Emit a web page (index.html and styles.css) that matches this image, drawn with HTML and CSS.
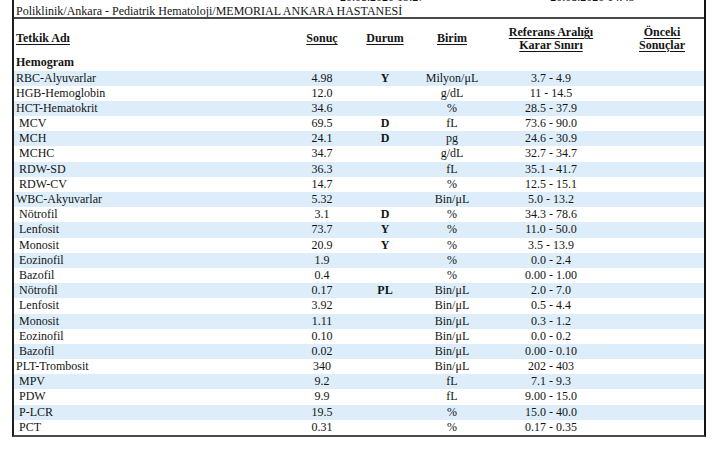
FILE: index.html
```html
<!DOCTYPE html>
<html lang="tr">
<head>
<meta charset="utf-8">
<title>Hemogram</title>
<link rel="stylesheet" href="styles.css">
</head>
<body>
<div class="sheet">
  <div class="topbar">
    <div class="dates"><span>20.08.2020 15:27</span><span>20.08.2020 14:43</span></div>
    <div class="clinic">Poliklinik/Ankara - Pediatrik Hematoloji/MEMORIAL ANKARA HASTANESİ</div>
  </div>
  <div class="head grid">
    <div class="c-name"><span class="hd">Tetkik Adı</span></div>
    <div class="c-center"><span class="hd">Sonuç</span></div>
    <div class="c-center"><span class="hd">Durum</span></div>
    <div class="c-center"><span class="hd">Birim</span></div>
    <div class="c-center"><span class="hd">Referans Aralığı</span><br><span class="hd">Karar Sınırı</span></div>
    <div class="c-center c-prev"><span class="hd">Önceki</span><br><span class="hd">Sonuçlar</span></div>
  </div>
  <div class="group grid"><div class="c-name">Hemogram</div></div>
  <div class="rows">
    <div class="row grid"><div class="c-name">RBC-Alyuvarlar</div><div class="c-center">4.98</div><div class="c-center st">Y</div><div class="c-center">Milyon/μL</div><div class="c-center">3.7 - 4.9</div><div></div></div>
    <div class="row grid"><div class="c-name">HGB-Hemoglobin</div><div class="c-center">12.0</div><div class="c-center st"></div><div class="c-center">g/dL</div><div class="c-center">11 - 14.5</div><div></div></div>
    <div class="row grid"><div class="c-name">HCT-Hematokrit</div><div class="c-center">34.6</div><div class="c-center st"></div><div class="c-center">%</div><div class="c-center">28.5 - 37.9</div><div></div></div>
    <div class="row grid"><div class="c-name sub">MCV</div><div class="c-center">69.5</div><div class="c-center st">D</div><div class="c-center">fL</div><div class="c-center">73.6 - 90.0</div><div></div></div>
    <div class="row grid"><div class="c-name sub">MCH</div><div class="c-center">24.1</div><div class="c-center st">D</div><div class="c-center">pg</div><div class="c-center">24.6 - 30.9</div><div></div></div>
    <div class="row grid"><div class="c-name sub">MCHC</div><div class="c-center">34.7</div><div class="c-center st"></div><div class="c-center">g/dL</div><div class="c-center">32.7 - 34.7</div><div></div></div>
    <div class="row grid"><div class="c-name sub">RDW-SD</div><div class="c-center">36.3</div><div class="c-center st"></div><div class="c-center">fL</div><div class="c-center">35.1 - 41.7</div><div></div></div>
    <div class="row grid"><div class="c-name sub">RDW-CV</div><div class="c-center">14.7</div><div class="c-center st"></div><div class="c-center">%</div><div class="c-center">12.5 - 15.1</div><div></div></div>
    <div class="row grid"><div class="c-name">WBC-Akyuvarlar</div><div class="c-center">5.32</div><div class="c-center st"></div><div class="c-center">Bin/μL</div><div class="c-center">5.0 - 13.2</div><div></div></div>
    <div class="row grid"><div class="c-name sub">Nötrofil</div><div class="c-center">3.1</div><div class="c-center st">D</div><div class="c-center">%</div><div class="c-center">34.3 - 78.6</div><div></div></div>
    <div class="row grid"><div class="c-name sub">Lenfosit</div><div class="c-center">73.7</div><div class="c-center st">Y</div><div class="c-center">%</div><div class="c-center">11.0 - 50.0</div><div></div></div>
    <div class="row grid"><div class="c-name sub">Monosit</div><div class="c-center">20.9</div><div class="c-center st">Y</div><div class="c-center">%</div><div class="c-center">3.5 - 13.9</div><div></div></div>
    <div class="row grid"><div class="c-name sub">Eozinofil</div><div class="c-center">1.9</div><div class="c-center st"></div><div class="c-center">%</div><div class="c-center">0.0 - 2.4</div><div></div></div>
    <div class="row grid"><div class="c-name sub">Bazofil</div><div class="c-center">0.4</div><div class="c-center st"></div><div class="c-center">%</div><div class="c-center">0.00 - 1.00</div><div></div></div>
    <div class="row grid"><div class="c-name sub">Nötrofil</div><div class="c-center">0.17</div><div class="c-center st">PL</div><div class="c-center">Bin/μL</div><div class="c-center">2.0 - 7.0</div><div></div></div>
    <div class="row grid"><div class="c-name sub">Lenfosit</div><div class="c-center">3.92</div><div class="c-center st"></div><div class="c-center">Bin/μL</div><div class="c-center">0.5 - 4.4</div><div></div></div>
    <div class="row grid"><div class="c-name sub">Monosit</div><div class="c-center">1.11</div><div class="c-center st"></div><div class="c-center">Bin/μL</div><div class="c-center">0.3 - 1.2</div><div></div></div>
    <div class="row grid"><div class="c-name sub">Eozinofil</div><div class="c-center">0.10</div><div class="c-center st"></div><div class="c-center">Bin/μL</div><div class="c-center">0.0 - 0.2</div><div></div></div>
    <div class="row grid"><div class="c-name sub">Bazofil</div><div class="c-center">0.02</div><div class="c-center st"></div><div class="c-center">Bin/μL</div><div class="c-center">0.00 - 0.10</div><div></div></div>
    <div class="row grid"><div class="c-name">PLT-Trombosit</div><div class="c-center">340</div><div class="c-center st"></div><div class="c-center">Bin/μL</div><div class="c-center">202 - 403</div><div></div></div>
    <div class="row grid"><div class="c-name sub">MPV</div><div class="c-center">9.2</div><div class="c-center st"></div><div class="c-center">fL</div><div class="c-center">7.1 - 9.3</div><div></div></div>
    <div class="row grid"><div class="c-name sub">PDW</div><div class="c-center">9.9</div><div class="c-center st"></div><div class="c-center">fL</div><div class="c-center">9.00 - 15.0</div><div></div></div>
    <div class="row grid"><div class="c-name sub">P-LCR</div><div class="c-center">19.5</div><div class="c-center st"></div><div class="c-center">%</div><div class="c-center">15.0 - 40.0</div><div></div></div>
    <div class="row grid"><div class="c-name sub">PCT</div><div class="c-center">0.31</div><div class="c-center st"></div><div class="c-center">%</div><div class="c-center">0.17 - 0.35</div><div></div></div>
  </div>
</div>
</body>
</html>
```
FILE: styles.css
```css
html, body {
  margin: 0;
  padding: 0;
  background: #ffffff;
}
body {
  font-family: "Liberation Serif", "Times New Roman", serif;
  font-size: 12px;
  color: #141414;
}
.sheet {
  margin-left: 12px;
  width: 690px;
  border-left: 2px solid #1e1e1e;
  border-right: 2px solid #111111;
  border-bottom: 2px solid #4a4a4a;
}
.topbar {
  height: 17px;
  overflow: hidden;
  border-bottom: 2px solid #4a4a4a;
}
.dates {
  display: flex;
  gap: 126px;
  margin-top: -9px;
  padding-left: 326px;
  line-height: 12px;
  height: 12px;
  overflow: hidden;
}
.clinic {
  margin-top: 2px;
  padding-left: 2px;
  line-height: 12px;
  height: 12px;
  white-space: nowrap;
}
.grid {
  display: grid;
  grid-template-columns: 276px 64px 62px 72px 126px 1fr;
  align-items: center;
}
.head {
  padding-top: 7px;
  padding-bottom: 4px;
  line-height: 12.5px;
  font-weight: bold;
}
.hd {
  text-decoration: underline;
  text-decoration-thickness: 1px;
  text-underline-offset: 2px;
}
.group {
  height: 15.5px;
  line-height: 15px;
  font-weight: bold;
}
.c-name {
  padding-left: 2px;
  white-space: nowrap;
}
.c-name.sub {
  padding-left: 5px;
}
.c-center {
  text-align: center;
  white-space: nowrap;
}
.c-prev {
  padding-left: 6px;
}
.row {
  height: 15.2px;
  line-height: 15.2px;
}
.rows .row:nth-child(odd) {
  background: #ddeefa;
}
.st {
  font-weight: bold;
}
```
